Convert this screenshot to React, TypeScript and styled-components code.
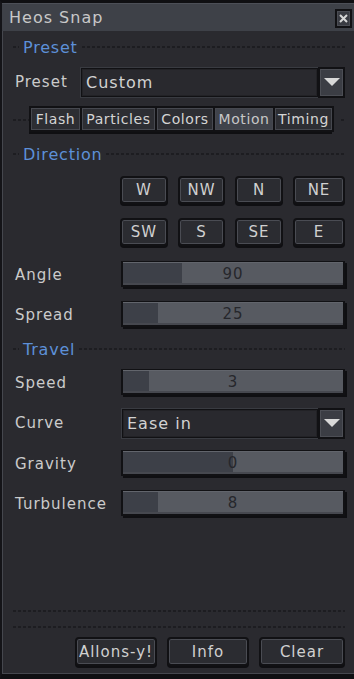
import { createGlobalStyle, styled } from "styled-components";

const GlobalStyle = createGlobalStyle`
    html, body {
        margin: 0;
        padding: 0;
        background: #0f0f12;
    }
    * {
        box-sizing: border-box;
    }
`;

const FONT = `"DejaVu Sans", "Liberation Sans", sans-serif`;

const Window = styled.div`
    width: 354px;
    height: 679px;
    display: flex;
    flex-direction: column;
    background: #2a2a2f;
    border-top: 3px solid #0f0f12;
    border-left: 2px solid #141418;
    border-bottom: 5px solid #0f0f12;
    box-shadow: inset 1px 0 0 #45474e, inset 0 -1px 0 #45474e;
    font-family: ${FONT};
    font-size: 15px;
    color: #cdcdcd;
    overflow: hidden;
`;

const TitleBar = styled.div`
    height: 28px;
    flex: none;
    display: flex;
    align-items: center;
    justify-content: space-between;
    padding: 0 2px 0 7px;
    background: #3e4148;
    border-top: 1px solid #4c4f57;
`;

const Title = styled.span`
    font-size: 16px;
    letter-spacing: 1px;
    color: #c8c8c8;
`;

const CloseButton = styled.div`
    width: 17px;
    height: 19px;
    margin-top: 2px;
    display: flex;
    align-items: center;
    justify-content: center;
    background: #393b42;
    border: 2px solid #111114;
    box-shadow: inset 0 0 0 1px #4a4c53;
`;

const Body = styled.div`
    flex: 1;
    display: flex;
    flex-direction: column;
    padding: 0 9px 0 11px;
`;

const Section = styled.div<{ $top: number }>`
    display: flex;
    align-items: center;
    gap: 2px;
    height: 14px;
    margin-top: ${(p) => p.$top}px;
`;

const Dash = styled.div<{ $w?: number }>`
    height: 2px;
    flex: ${(p) => (p.$w ? `0 0 ${p.$w}px` : "1")};
    background: repeating-linear-gradient(to right, #1d1d21 0 3px, transparent 3px 5px);
`;

const SectionTitle = styled.span`
    color: #5d90d8;
    font-size: 16px;
    letter-spacing: 0.8px;
    padding: 0 2px;
`;

const Row = styled.div<{ $label: number; $top: number }>`
    display: grid;
    grid-template-columns: ${(p) => p.$label}px 1fr;
    align-items: center;
    margin-top: ${(p) => p.$top}px;
`;

const Label = styled.span`
    padding-left: 2px;
    letter-spacing: 1px;
    color: #cbcbcb;
`;

const Select = styled.div`
    display: flex;
    align-items: center;
    height: 30px;
`;

const SelectField = styled.div`
    flex: 1;
    height: 29px;
    display: flex;
    align-items: center;
    padding-left: 4px;
    background: #29292e;
    border: 1px solid #111114;
    box-shadow: 0 0 0 1px #393b41, inset 0 0 0 1px #222226;
    margin: 0 0 0 1px;
    color: #d2d2d2;
    font-size: 16px;
    letter-spacing: 1px;
`;

const SelectArrow = styled.div`
    flex: none;
    width: 27px;
    height: 31px;
    display: flex;
    align-items: center;
    justify-content: center;
    background: #3b3d44;
    border: 2px solid #111114;
    box-shadow: inset 0 0 0 1px #4c4e55;
`;

const TabStrip = styled.div`
    display: flex;
    align-items: center;
    margin-top: 9px;
`;

const Tabs = styled.div`
    display: flex;
    flex: none;
    height: 28px;
    padding-bottom: 2px;
    background: #0f0f12;
`;

const Tab = styled.div<{ $w: number; $active?: boolean }>`
    width: ${(p) => p.$w}px;
    height: 26px;
    display: flex;
    align-items: center;
    justify-content: center;
    background: ${(p) => (p.$active ? "#40434b" : "#2d2e33")};
    border: 2px solid #111114;
    margin-right: -2px;
    box-shadow: inset 0 0 0 1px #46484f;
    font-size: 14px;
    letter-spacing: 0.6px;
    color: ${(p) => (p.$active ? "#c7c7c7" : "#d4d4d4")};
`;

const DirGrid = styled.div`
    display: grid;
    grid-template-columns: 48px 47px 48px 1fr;
    column-gap: 10px;
    row-gap: 14px;
    margin: 15px 0 0 107px;
`;

const Button = styled.div`
    height: 28px;
    display: flex;
    align-items: center;
    justify-content: center;
    background: #2b2c31;
    border: 2px solid #111114;
    border-radius: 4px;
    box-shadow: inset 0 0 0 1px #4a4c53, 0 2px 0 #0f0f12;
    font-size: 15px;
    letter-spacing: 1px;
    color: #d0d0d0;
`;

const Slider = styled.div`
    position: relative;
    height: 26px;
    margin-bottom: 2px;
    background: #575a61;
    border: 2px solid #111114;
    border-top-width: 1px;
    box-shadow: 2px 2px 0 #0f0f12, inset 0 1px 0 #62656c, inset 0 -2px 0 #46484f;
    display: flex;
    align-items: center;
    justify-content: center;
`;

const SliderFill = styled.div`
    position: absolute;
    left: 0;
    top: 1px;
    bottom: 2px;
    background: #3d4048;
`;

const SliderValue = styled.span`
    position: relative;
    color: #26272c;
    font-size: 15px;
    letter-spacing: 1px;
`;

const Spacer = styled.div`
    flex: 1;
`;

const Footer = styled.div`
    display: flex;
    justify-content: flex-end;
    gap: 10px;
    margin: 9px 0 8px;
`;

const FooterButton = styled(Button)<{ $w: number }>`
    width: ${(p) => p.$w}px;
    height: 29px;
`;

const Arrow = () => (
    <svg width="16" height="8" viewBox="0 0 16 8">
        <polygon points="0,0 16,0 8,8" fill="#d8d8d8" />
    </svg>
);

const sliders1 = [
    { label: "Angle", value: "90", pct: 27, top: 15 },
    { label: "Spread", value: "25", pct: 16, top: 12 },
];

const sliders2 = [
    { label: "Gravity", value: "0", pct: 50, top: 12 },
    { label: "Turbulence", value: "8", pct: 16, top: 12 },
];

const SliderRow = ({ label, value, pct, top }: { label: string; value: string; pct: number; top: number }) => (
    <Row $label={108} $top={top}>
        <Label>{label}</Label>
        <Slider>
            <SliderFill style={{ width: `${pct}%` }} />
            <SliderValue>{value}</SliderValue>
        </Slider>
    </Row>
);

export default function App() {
    return (
        <Window>
            <GlobalStyle />
            <TitleBar>
                <Title>Heos Snap</Title>
                <CloseButton>
                    <svg width="9" height="9" viewBox="0 0 9 9">
                        <path d="M1 1L8 8M8 1L1 8" stroke="#d6d6d6" strokeWidth="2" />
                    </svg>
                </CloseButton>
            </TitleBar>
            <Body>
                <Section $top={9}>
                    <Dash $w={6} />
                    <SectionTitle>Preset</SectionTitle>
                    <Dash />
                </Section>
                <Row $label={67} $top={13}>
                    <Label>Preset</Label>
                    <Select>
                        <SelectField>Custom</SelectField>
                        <SelectArrow><Arrow /></SelectArrow>
                    </Select>
                </Row>
                <TabStrip>
                    <Dash $w={16} />
                    <Tabs>
                        <Tab $w={53}>Flash</Tab>
                        <Tab $w={77}>Particles</Tab>
                        <Tab $w={60}>Colors</Tab>
                        <Tab $w={62} $active>Motion</Tab>
                        <Tab $w={61}>Timing</Tab>
                    </Tabs>
                    <Dash style={{ marginLeft: 9 }} />
                </TabStrip>
                <Section $top={13}>
                    <Dash $w={6} />
                    <SectionTitle>Direction</SectionTitle>
                    <Dash />
                </Section>
                <DirGrid>
                    {["W", "NW", "N", "NE", "SW", "S", "SE", "E"].map((d) => (
                        <Button key={d}>{d}</Button>
                    ))}
                </DirGrid>
                {sliders1.map((s) => (
                    <SliderRow key={s.label} {...s} />
                ))}
                <Section $top={13}>
                    <Dash $w={6} />
                    <SectionTitle>Travel</SectionTitle>
                    <Dash />
                </Section>
                <SliderRow label="Speed" value="3" pct={12} top={13} />
                <Row $label={108} $top={11}>
                    <Label>Curve</Label>
                    <Select>
                        <SelectField>Ease in</SelectField>
                        <SelectArrow><Arrow /></SelectArrow>
                    </Select>
                </Row>
                {sliders2.map((s) => (
                    <SliderRow key={s.label} {...s} />
                ))}
                <Spacer />
                <Dash style={{ flex: "none", marginBottom: 14 }} />
                <Dash style={{ flex: "none" }} />
                <Footer>
                    <FooterButton $w={82}>Allons-y!</FooterButton>
                    <FooterButton $w={82}>Info</FooterButton>
                    <FooterButton $w={86}>Clear</FooterButton>
                </Footer>
            </Body>
        </Window>
    );
}
